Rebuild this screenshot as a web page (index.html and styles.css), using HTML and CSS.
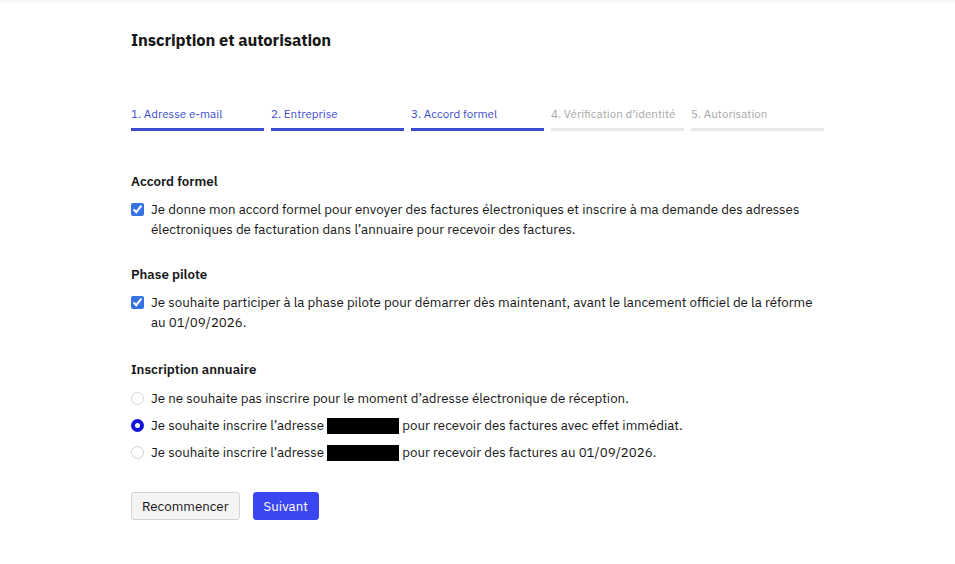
FILE: index.html
```html
<!DOCTYPE html>
<html lang="fr">
<head>
<meta charset="UTF-8" />
<meta name="viewport" content="width=device-width,initial-scale=1.0" />
<title>Inscription et autorisation</title>
<link rel="stylesheet" href="styles.css">
</head>
<body>
  <div class="topline"></div>
  <main class="page">
    <h1 class="title">Inscription et autorisation</h1>

    <ol class="steps">
      <li class="step done">1. Adresse e-mail</li>
      <li class="step done">2. Entreprise</li>
      <li class="step done">3. Accord formel</li>
      <li class="step">4. Vérification d’identité</li>
      <li class="step">5. Autorisation</li>
    </ol>

    <section class="group">
      <h2 class="group-title">Accord formel</h2>
      <label class="opt">
        <input type="checkbox" class="check" checked>
        <span>Je donne mon accord formel pour envoyer des factures électroniques et inscrire à ma demande des adresses électroniques de facturation dans l’annuaire pour recevoir des factures.</span>
      </label>
    </section>

    <section class="group">
      <h2 class="group-title">Phase pilote</h2>
      <label class="opt">
        <input type="checkbox" class="check" checked>
        <span>Je souhaite participer à la phase pilote pour démarrer dès maintenant, avant le lancement officiel de la réforme au 01/09/2026.</span>
      </label>
    </section>

    <section class="group annuaire">
      <h2 class="group-title">Inscription annuaire</h2>
      <div class="radios">
        <label class="opt">
          <input type="radio" name="annuaire" class="radio">
          <span>Je ne souhaite pas inscrire pour le moment d’adresse électronique de réception.</span>
        </label>
        <label class="opt">
          <input type="radio" name="annuaire" class="radio" checked>
          <span>Je souhaite inscrire l’adresse <span class="redact"></span> pour recevoir des factures avec effet immédiat.</span>
        </label>
        <label class="opt">
          <input type="radio" name="annuaire" class="radio">
          <span>Je souhaite inscrire l’adresse <span class="redact"></span> pour recevoir des factures au 01/09/2026.</span>
        </label>
      </div>
    </section>

    <div class="actions">
      <button class="btn">Recommencer</button>
      <button class="btn primary">Suivant</button>
    </div>
  </main>
</body>
</html>
```

FILE: styles.css
```css
body { margin:0; background:#fff; color:#161616; font-family: "IBM Plex Sans", Inter, "Noto Sans", Arial, sans-serif; font-size:13.3px; }
.topline { height:4px; background:linear-gradient(#f3f3f3, #fff); }
.page { width:694px; padding:26px 0 0 131px; }
.title { margin:0; font-size:16.5px; font-weight:700; line-height:20px; letter-spacing:-0.1px; }

.steps { list-style:none; margin:57px 0 0; padding:0; display:grid; grid-template-columns:repeat(5, 133px); gap:7px; }
.step { font-size:11.6px; line-height:14px; color:#a8a8a8; padding-bottom:7px; border-bottom:3px solid #e8e8e8; white-space:nowrap; }
.step.done { color:#3b4bd0; border-bottom-color:#3b4bd0; }

.group { margin-top:41px; }
.group + .group { margin-top:26px; }
.group.annuaire { margin-top:28px; }
.group-title { margin:0 0 9px; font-size:13.3px; font-weight:600; line-height:18px; }
.opt { display:flex; align-items:flex-start; gap:7px; line-height:20px; width:690px; }
.opt input { flex:none; margin:4px 0 0; width:13px; height:13px; }
.check { accent-color:#3574e0; }
.radio { appearance:none; -webkit-appearance:none; box-sizing:border-box; border:1px solid #d2d2d2; border-radius:50%; background:#fff; }
.radio:checked { border:4px solid #1414d8; }
.radios { display:flex; flex-direction:column; gap:7px; margin-top:10px; }
.redact { display:inline-block; width:72px; height:16px; background:#000; vertical-align:-4px; }

.actions { display:flex; gap:13px; margin-top:30px; }
.btn { font:inherit; font-size:13.3px; height:28px; padding:0 10px; border-radius:3px; border:1px solid #d4d4d4; background:#f4f4f4; color:#161616; cursor:pointer; }
.btn.primary { background:#3a46f0; border-color:#3a46f0; color:#fff; }
```
